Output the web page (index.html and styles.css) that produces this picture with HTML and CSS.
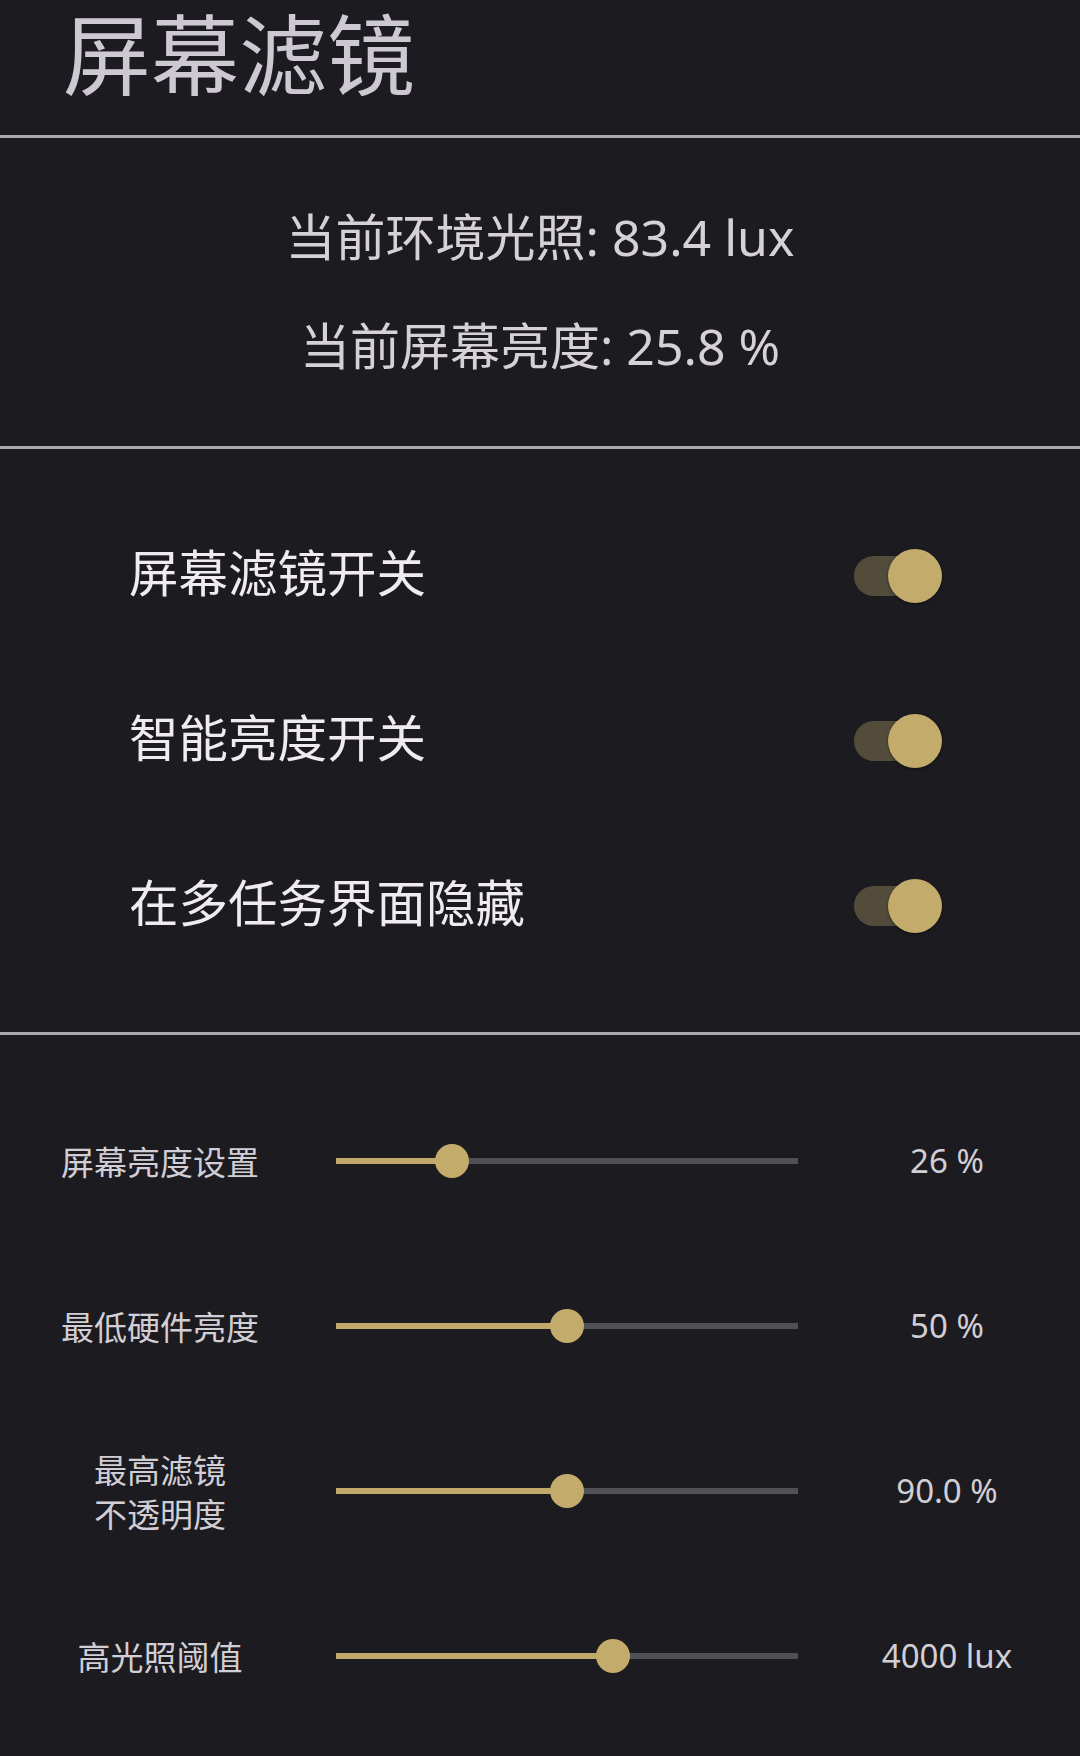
FILE: index.html
```html
<!DOCTYPE html>
<html lang="zh">
<head>
<meta charset="utf-8">
<title>屏幕滤镜</title>
<link rel="stylesheet" href="styles.css">
</head>
<body>
<div class="page">
  <header class="header">
    <h1 class="title">屏幕滤镜</h1>
  </header>

  <section class="info">
    <div class="info-line">当前环境光照: 83.4 lux</div>
    <div class="info-line">当前屏幕亮度: 25.8 %</div>
  </section>

  <section class="toggles">
    <div class="toggle-row">
      <span class="toggle-label">屏幕滤镜开关</span>
      <span class="switch on"><span class="switch-track"></span><span class="switch-thumb"></span></span>
    </div>
    <div class="toggle-row">
      <span class="toggle-label">智能亮度开关</span>
      <span class="switch on"><span class="switch-track"></span><span class="switch-thumb"></span></span>
    </div>
    <div class="toggle-row">
      <span class="toggle-label">在多任务界面隐藏</span>
      <span class="switch on"><span class="switch-track"></span><span class="switch-thumb"></span></span>
    </div>
  </section>

  <section class="sliders">
    <div class="slider-row">
      <div class="slider-label">屏幕亮度设置</div>
      <div class="slider">
        <div class="slider-rail"></div>
        <div class="slider-fill" style="width:25%"></div>
        <div class="slider-thumb" style="left:25%"></div>
      </div>
      <div class="slider-value">26 %</div>
    </div>
    <div class="slider-row">
      <div class="slider-label">最低硬件亮度</div>
      <div class="slider">
        <div class="slider-rail"></div>
        <div class="slider-fill" style="width:50%"></div>
        <div class="slider-thumb" style="left:50%"></div>
      </div>
      <div class="slider-value">50 %</div>
    </div>
    <div class="slider-row">
      <div class="slider-label">最高滤镜<br>不透明度</div>
      <div class="slider">
        <div class="slider-rail"></div>
        <div class="slider-fill" style="width:50%"></div>
        <div class="slider-thumb" style="left:50%"></div>
      </div>
      <div class="slider-value">90.0 %</div>
    </div>
    <div class="slider-row">
      <div class="slider-label">高光照阈值</div>
      <div class="slider">
        <div class="slider-rail"></div>
        <div class="slider-fill" style="width:60%"></div>
        <div class="slider-thumb" style="left:60%"></div>
      </div>
      <div class="slider-value">4000 lux</div>
    </div>
  </section>
</div>
</body>
</html>
```

FILE: styles.css
```css
html, body {
  margin: 0;
  padding: 0;
  background: #1c1b20;
}

body {
  font-family: "Noto Sans", "Noto Sans CJK SC", sans-serif;
  color: #d3cfd6;
}

.page {
  width: 1080px;
  min-height: 1756px;
  background: #1c1b20;
}

.header {
  height: 135px;
  border-bottom: 3px solid #a9a9ac;
}

.title {
  margin: 0;
  padding-left: 63px;
  font-size: 88px;
  line-height: 100px;
  font-weight: 400;
  color: #cdc8d1;
  font-family: "Noto Sans CJK SC", sans-serif;
}

.info {
  padding: 45px 0 45px;
  border-bottom: 3px solid #a9a9ac;
  text-align: center;
}

.info-line {
  font-size: 50px;
  line-height: 109px;
  color: #d6d1d9;
}

.toggles {
  padding: 44px 0 44px;
  border-bottom: 3px solid #a9a9ac;
}

.toggle-row {
  height: 165px;
  display: flex;
  align-items: center;
  justify-content: space-between;
  padding: 0 138px 0 129px;
}

.toggle-label {
  font-family: "Noto Sans CJK SC", sans-serif;
  font-size: 49.5px;
  line-height: 60px;
  padding-bottom: 10px;
  color: #efebf0;
}

.switch {
  position: relative;
  width: 88px;
  height: 56px;
  display: block;
}

.switch-track {
  position: absolute;
  left: 0;
  top: 8px;
  width: 86px;
  height: 40px;
  border-radius: 20px;
  background: #544c3b;
}

.switch-thumb {
  position: absolute;
  right: 0;
  top: 1px;
  width: 54px;
  height: 54px;
  border-radius: 50%;
  background: #c3ac6b;
  box-shadow: 0 1px 3px rgba(0, 0, 0, 0.5);
}

.sliders {
  padding-top: 43px;
}

.slider-row {
  height: 165px;
  display: flex;
  align-items: center;
  padding-left: 40px;
}

.slider-label {
  width: 240px;
  text-align: center;
  font-family: "Noto Sans CJK SC", sans-serif;
  font-size: 33px;
  line-height: 44px;
  color: #d2ced5;
}

.slider {
  position: relative;
  width: 462px;
  height: 34px;
  margin: 0 39px 0 56px;
}

.slider-rail,
.slider-fill {
  position: absolute;
  left: 0;
  top: 14px;
  height: 6px;
}

.slider-rail {
  width: 100%;
  background: #505057;
}

.slider-fill {
  background: #c0a96b;
}

.slider-thumb {
  position: absolute;
  top: 0;
  width: 34px;
  height: 34px;
  margin-left: -17px;
  border-radius: 50%;
  background: #c3ac6b;
}

.slider-value {
  width: 220px;
  text-align: center;
  font-size: 33px;
  color: #d2ced5;
}
```
